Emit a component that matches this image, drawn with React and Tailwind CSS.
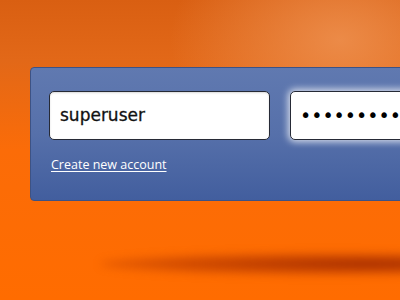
import React from "react";

export default function App() {
  return (
    <div className="relative w-[400px] h-[300px] overflow-hidden bg-[radial-gradient(ellipse_170px_120px_at_340px_40px,rgba(238,145,80,0.85),rgba(238,145,80,0)),linear-gradient(180deg,#d95f12_0px,#e26818_60px,#fb6c08_150px,#ff6c00_300px)]">
      <div className="absolute left-[100px] top-[253px] w-[430px] h-[22px] rounded-[50%] bg-[radial-gradient(ellipse_at_62%_50%,rgba(165,45,0,1),rgba(185,58,0,0.65)_50%,rgba(200,70,0,0)_85%)] blur-[4px]" />
      <div className="relative pt-[67px] pl-[30px]">
        <div className="w-[420px] h-[134px] rounded-[4px] border border-[#3d5284] bg-[linear-gradient(180deg,#6079b0,#5670aa_50%,#425e9e)] pt-[23px] pl-[18px] font-['DejaVu_Sans',sans-serif]">
          <div className="flex gap-[20px]">
            <div className="shrink-0 w-[221px] h-[49px] rounded-[5px] border border-[#262a36] bg-white shadow-[inset_0_1px_2px_rgba(0,0,0,0.15)] flex items-center pl-[10px] text-[17px] text-[#111] [-webkit-text-stroke:0.3px_#111]">
              superuser
            </div>
            <div className="shrink-0 w-[200px] h-[49px] rounded-[5px] border border-[#262a36] bg-white shadow-[0_0_7px_2px_rgba(255,255,255,0.75)] flex items-center pl-[9px] text-[19px] text-black">
              ••••••••••••
            </div>
          </div>
          <a href="#" className="inline-block mt-[19px] ml-[2px] font-['Open_Sans',sans-serif] text-[12.5px] text-white underline underline-offset-2 leading-none">
            Create new account
          </a>
        </div>
      </div>
    </div>
  );
}
